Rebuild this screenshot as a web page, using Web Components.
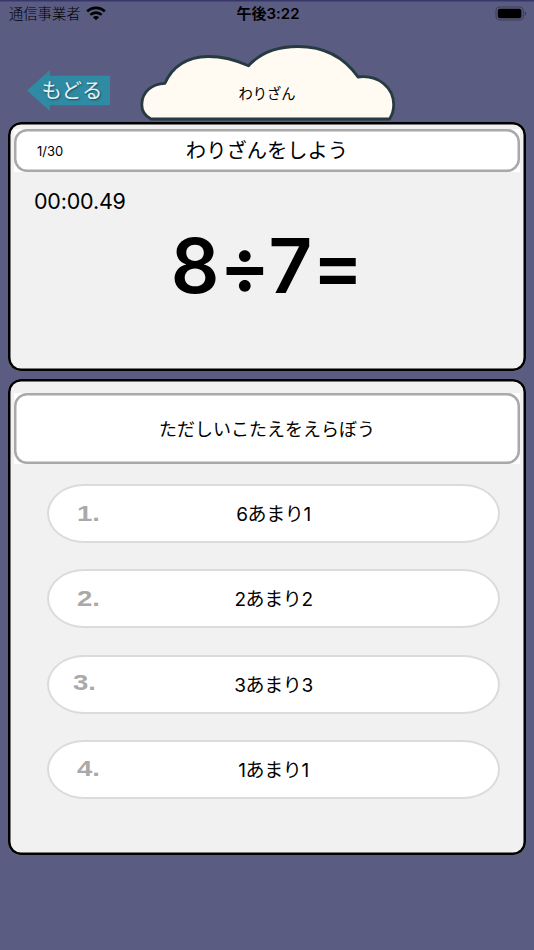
<!DOCTYPE html>
<html lang="ja">
<head>
<meta charset="utf-8">
<title>わりざん</title>
<style>
  body {
    margin: 0;
    height: 950px;
    overflow: hidden;
    background: #5a5c82;
    color: #000;
    font-family: Inter, "Noto Sans CJK JP", sans-serif;
    font-feature-settings: "calt" 0;
  }
</style>
</head>
<body>
<quiz-app>
  <status-bar carrier="通信事業者" time="午後3:22"></status-bar>
  <quiz-header heading="わりざん" back="もどる"></quiz-header>
  <quiz-card class="question">
    <label-box slot="label" count="1/30">わりざんをしよう</label-box>
    <quiz-question time="00:00.49">8÷7=</quiz-question>
  </quiz-card>
  <quiz-card class="answers">
    <label-box slot="label" class="tall">ただしいこたえをえらぼう</label-box>
    <answer-list>
      <answer-option number="1.">6あまり1</answer-option>
      <answer-option number="2.">2あまり2</answer-option>
      <answer-option number="3." class="shifted">3あまり3</answer-option>
      <answer-option number="4.">1あまり1</answer-option>
    </answer-list>
  </quiz-card>
</quiz-app>

<script>
class BaseElement extends HTMLElement {
  constructor() {
    super();
    this.root = this.attachShadow({ mode: "open" });
    this.root.innerHTML = this.render();
  }
}

class QuizApp extends BaseElement {
  render() {
    return `
      <style>
        :host {
          display: flex;
          flex-direction: column;
          box-sizing: border-box;
          width: 534px;
          height: 950px;
          padding-top: 1px;
          box-shadow: inset 0 1.5px #37366a;
        }
      </style>
      <slot></slot>
    `;
  }
}
customElements.define("quiz-app", QuizApp);

class StatusBar extends BaseElement {
  render() {
    return `
      <style>
        :host {
          display: grid;
          grid-template-columns: 1fr auto 1fr;
          align-items: center;
          height: 25px;
          padding: 0 7px 0 9px;
          font-size: 14.3px;
          line-height: 25px;
        }
        .carrier { display: flex; align-items: center; gap: 6px; font-weight: 300; }
        .time { font-size: 15px; font-weight: 600; }
        .battery { justify-self: end; }
        svg { display: block; }
      </style>
      <div class="carrier">
        <span>${this.getAttribute("carrier")}</span>
        <svg width="20" height="15" viewBox="0 0 20 15">
          <g fill="none" stroke="#000" stroke-width="2.7">
            <path d="M1.2 5.4C6 .6 14 .6 18.8 5.4"/>
            <path d="M4.4 8.9C7.5 5.9 12.5 5.9 15.6 8.9"/>
          </g>
          <path d="M6.9 11.2C8.6 9.6 11.4 9.6 13.1 11.2L10 14.3Z"/>
        </svg>
      </div>
      <span class="time">${this.getAttribute("time")}</span>
      <svg class="battery" width="32" height="15" viewBox="0 0 32 15">
        <rect x="1" y="1" width="27.3" height="13" rx="3.7" fill="none" stroke="#3d3e59" stroke-width="1.1"/>
        <rect x="2.8" y="2.8" width="23.6" height="9.4" rx="2"/>
        <path d="M29.7 5.2C31.8 6 31.8 9 29.7 9.8Z" fill="#3d3e59"/>
      </svg>
    `;
  }
}
customElements.define("status-bar", StatusBar);

class QuizHeader extends BaseElement {
  render() {
    return `
      <style>
        :host {
          display: flex;
          align-items: flex-start;
          height: 96px;
          padding-left: 27px;
        }
        .back {
          display: flex;
          align-items: center;
          justify-content: center;
          box-sizing: border-box;
          width: 83px;
          height: 41px;
          margin-top: 44px;
          padding: 1px 0 0 7px;
          background: #2f8aa3;
          clip-path: polygon(0 50%, 27.5% 0, 27.5% 14%, 100% 14%, 100% 86%, 27.5% 86%, 27.5% 100%);
          color: #e9f3f6;
          font-size: 20.5px;
          line-height: 30px;
          text-shadow: 1px 1px 2px rgba(0, 0, 0, 0.45);
          white-space: nowrap;
        }
        .cloud {
          display: grid;
          width: 258px;
          height: 80px;
          margin: 16px 0 0 29px;
        }
        .cloud > * { grid-area: 1 / 1; }
        .cloud span {
          justify-self: center;
          margin-top: 40px;
          padding-right: 2px;
          font-size: 14.3px;
          line-height: 24px;
        }
      </style>
      <div class="back">${this.getAttribute("back")}</div>
      <div class="cloud">
        <svg width="258" height="80" viewBox="139 42 258 80">
          <path d="M151 119C145 116 141.8 111 141.8 104.5C142 92 152 83.5 165 83.3C172 67 187 56.5 208 56.5C222 56.5 236 60 248.5 65.8C260 53 278 46.5 298 46.5C324 46.5 344 57 358 77C379 74.5 393.5 88 393.7 104.5C393.7 110 392.5 114.5 389.5 119Z" fill="#fffbf3" stroke="#263b3f" stroke-width="2.8" stroke-linejoin="round"/>
        </svg>
        <span>${this.getAttribute("heading")}</span>
      </div>
    `;
  }
}
customElements.define("quiz-header", QuizHeader);

class QuizCard extends BaseElement {
  render() {
    return `
      <style>
        :host {
          display: flex;
          flex-direction: column;
          box-sizing: border-box;
          margin: 0 8px;
          padding: 7px 6px 0;
          border-radius: 13px;
          background: #f1f1f1;
          box-shadow: inset 0 0 0 2.5px #000;
        }
        :host(.question) { height: 249px; }
        :host(.answers) {
          height: 476px;
          margin-top: 8px;
          padding-top: 14px;
        }
      </style>
      <slot name="label"></slot>
      <slot></slot>
    `;
  }
}
customElements.define("quiz-card", QuizCard);

class LabelBox extends BaseElement {
  render() {
    const count = this.getAttribute("count");
    return `
      <style>
        :host {
          display: block;
          height: 43px;
          background: #fff;
          font-size: 20.3px;
          line-height: 38px;
        }
        :host(.tall) {
          height: 71px;
          font-size: 18px;
          line-height: 67px;
        }
        .frame {
          display: grid;
          grid-template-columns: 1fr auto 1fr;
          align-items: center;
          box-sizing: border-box;
          height: 100%;
          padding-top: 1px;
          border-radius: 13px;
          box-shadow: inset 0 0 0 2.5px #a9a9a9;
        }
        .count { padding-left: 23px; font-size: 13px; }
        .text { grid-column: 2; }
      </style>
      <div class="frame">
        ${count ? `<span class="count">${count}</span>` : ""}
        <span class="text"><slot></slot></span>
      </div>
    `;
  }
}
customElements.define("label-box", LabelBox);

class QuizQuestion extends BaseElement {
  render() {
    return `
      <style>
        :host { display: flex; flex-direction: column; }
        .time {
          margin: 14px 0 0 20px;
          font-size: 21.5px;
          letter-spacing: -0.2px;
          line-height: 30px;
        }
        .formula {
          align-self: center;
          margin-top: 4px;
          font-size: 76px;
          font-weight: 600;
          line-height: 90px;
        }
      </style>
      <span class="time">${this.getAttribute("time")}</span>
      <span class="formula"><slot></slot></span>
    `;
  }
}
customElements.define("quiz-question", QuizQuestion);

class AnswerList extends BaseElement {
  render() {
    return `
      <style>
        :host {
          display: flex;
          flex-direction: column;
          gap: 26.3px;
          padding: 20px 20px 0 33px;
        }
      </style>
      <slot></slot>
    `;
  }
}
customElements.define("answer-list", AnswerList);

class AnswerOption extends BaseElement {
  render() {
    return `
      <style>
        :host {
          display: grid;
          grid-template-columns: 1fr auto 1fr;
          align-items: center;
          box-sizing: border-box;
          height: 59px;
          border: 2px solid #dbdbdb;
          border-radius: 37px / 29.5px;
          background: #fff;
          font-size: 19px;
          line-height: 30px;
        }
        .number {
          justify-self: start;
          margin-left: 28px;
          color: #a9a9a9;
          font: bold 22px/30px "Liberation Sans", sans-serif;
          transform: scaleX(1.25);
          transform-origin: left;
        }
        :host(.shifted) .number { margin: -2px 0 0 24px; }
        .text { padding-top: 3px; letter-spacing: -0.4px; }
      </style>
      <span class="number">${this.getAttribute("number")}</span>
      <span class="text"><slot></slot></span>
    `;
  }
}
customElements.define("answer-option", AnswerOption);
</script>
</body>
</html>
